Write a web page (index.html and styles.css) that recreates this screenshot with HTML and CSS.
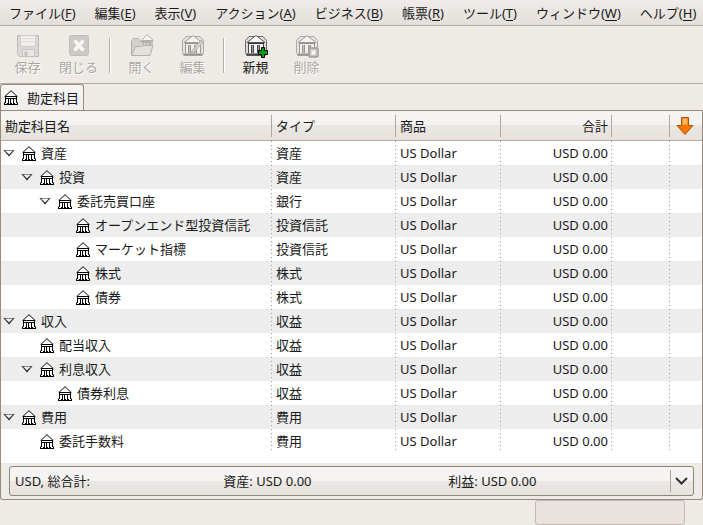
FILE: index.html
```html
<!DOCTYPE html>
<html lang="ja">
<head>
<meta charset="utf-8">
<title>勘定科目</title>
<link rel="stylesheet" href="styles.css">
</head>
<body>
<svg class="defs" aria-hidden="true">
  <symbol id="bank" viewBox="0 0 14 15">
    <path d="M7 .7 .8 6.500h12.400z" fill="#fff" stroke="#000"/>
    <path d="M1.500 7h11v6h-11z" fill="#fff"/>
    <path d="M1.500 8.500h11" stroke="#000"/>
    <path d="M1.500 7v6M4.500 8v5M6.500 8v5M9.500 8v5M12.500 7v6" fill="none" stroke="#000"/>
    <path d="M3 13.500h8" stroke="#000" stroke-dasharray="2 1"/>
    <path d="M0 14.500h14" stroke="#000"/>
    <path d="M.5 12.500v2M13.500 12.500v2" stroke="#000"/>
  </symbol>
  <symbol id="tile" viewBox="0 0 24 24">
    <path d="M5 2.500h14l3.500 4v12l-1.500 3h-18l-1.500-3v-12z" fill="#dcdcd8" stroke="#6a6a66"/>
    <path d="M2.500 20.500h19" stroke="#444" stroke-width="2"/>
    <path d="M5 10h14v9h-14z" fill="#f4f4f2"/>
    <path d="M12 1.500 3 8.500h18z" fill="#fafaf8" stroke="#555"/>
    <path d="M4 9.500h16" stroke="#333"/>
    <path d="M4.500 10v9M7.500 11v8M9.500 11v8M13.500 11v8M15.500 11v8M19.500 10v9" stroke="#444"/>
    <path d="M8.500 11v8M14.500 11v8" stroke="#999"/>
  </symbol>
</svg>

<nav class="menubar">
  <button>ファイル(<u>F</u>)</button>
  <button>編集(<u>E</u>)</button>
  <button>表示(<u>V</u>)</button>
  <button>アクション(<u>A</u>)</button>
  <button>ビジネス(<u>B</u>)</button>
  <button>帳票(<u>R</u>)</button>
  <button>ツール(<u>T</u>)</button>
  <button>ウィンドウ(<u>W</u>)</button>
  <button>ヘルプ(<u>H</u>)</button>
</nav>

<div class="toolbar" role="toolbar">
  <button class="tool" disabled>
    <svg viewBox="0 0 24 24" aria-hidden="true">
      <path d="M1.500 1.500h21v21h-19l-2-2z" fill="#c9c9c6" stroke="#8d8d88"/>
      <path d="M4.500 1.500h15v11h-15z" fill="#f4f4f2" stroke="#b0b0aa"/>
      <path d="M6 4.500h12M6 7.500h12" stroke="#d2d2ce"/>
      <path d="M6.500 15.500h12v7h-12z" fill="#e6e6e3" stroke="#9a9a95"/>
      <path d="M8.500 17.500h3v5h-3z" fill="#999994"/>
    </svg>
    保存
  </button>
  <button class="tool" disabled>
    <svg viewBox="0 0 24 24" aria-hidden="true">
      <rect x="2.500" y="1.500" width="19" height="20" rx="2" fill="#a9a9a5" stroke="#92928d"/>
      <path d="M7.500 6.500l9 10M16.500 6.500l-9 10" stroke="#fff" stroke-width="3.500"/>
    </svg>
    閉じる
  </button>
  <span class="separator"></span>
  <button class="tool" disabled>
    <svg viewBox="0 0 24 24" aria-hidden="true">
      <path d="M1.500 20.500v-14l2-2h5l2 3h10v13z" fill="#b9b9b4" stroke="#777"/>
      <path d="M17 .7 11.500 6.500h12z" fill="#fff" stroke="#777"/>
      <path d="M12 8.500h11M13.500 7v5M16.500 7v5M19.500 7v5M22 7v5" stroke="#777"/>
      <path d="M1.500 21.500l4-9h6l2-1h9.500l-3 10z" fill="#d6d6d2" stroke="#777"/>
    </svg>
    開く
  </button>
  <button class="tool" disabled>
    <svg viewBox="0 0 24 24" aria-hidden="true">
      <use href="#tile"/>
      <path d="M11 17 20 6l2 2-9 10-3 1z" fill="#bbb" stroke="#777"/>
    </svg>
    編集
  </button>
  <span class="separator"></span>
  <button class="tool">
    <svg viewBox="0 0 24 24" aria-hidden="true">
      <use href="#tile"/>
      <path d="M17.500 13.500h3v3h3v4h-3v3h-3v-3h-3v-4h3z" fill="#0a9b0a" stroke="#000"/>
    </svg>
    新規
  </button>
  <button class="tool" disabled>
    <svg viewBox="0 0 24 24" aria-hidden="true">
      <use href="#tile"/>
      <rect x="14" y="14" width="9" height="9" rx="1" fill="#999" stroke="#555" stroke-width="1.500"/>
      <path d="M16.500 16.500l4 4M20.500 16.500l-4 4" stroke="#fff" stroke-width="2"/>
    </svg>
    削除
  </button>
</div>

<div class="tabs" role="tablist">
  <button class="tab" role="tab" aria-selected="true"><svg class="bank" aria-hidden="true"><use href="#bank"/></svg>勘定科目</button>
</div>

<main class="page">
  <div class="tree">
    <table>
      <colgroup><col><col class="c-type"><col class="c-commodity"><col class="c-total"><col class="c-blank"><col class="c-menu"></colgroup>
      <thead>
        <tr>
          <th>勘定科目名</th><th>タイプ</th><th>商品</th><th class="num">合計</th><th></th>
          <th class="menu"><button aria-label="列の選択">
            <svg viewBox="0 0 18 20" aria-hidden="true">
              <path d="M5.500 1.500h7v8h4.500L9 18.500 1 9.500h4.500z" fill="#f57900" stroke="#b35000"/>
              <path d="M6.500 2.500h5v6h-5z" fill="#fcb560"/>
            </svg></button></th>
        </tr>
      </thead>
      <tbody>
        <tr><td><div class="name"><button class="toggle" aria-label="資産を折りたたむ"></button><svg class="bank" aria-hidden="true"><use href="#bank"/></svg>資産</div></td><td>資産</td><td>US Dollar</td><td class="num">USD 0.00</td><td></td><td></td></tr>
        <tr><td><div class="name level-1"><button class="toggle" aria-label="投資を折りたたむ"></button><svg class="bank" aria-hidden="true"><use href="#bank"/></svg>投資</div></td><td>資産</td><td>US Dollar</td><td class="num">USD 0.00</td><td></td><td></td></tr>
        <tr><td><div class="name level-2"><button class="toggle" aria-label="委託売買口座を折りたたむ"></button><svg class="bank" aria-hidden="true"><use href="#bank"/></svg>委託売買口座</div></td><td>銀行</td><td>US Dollar</td><td class="num">USD 0.00</td><td></td><td></td></tr>
        <tr><td><div class="name level-3 leaf"><svg class="bank" aria-hidden="true"><use href="#bank"/></svg>オープンエンド型投資信託</div></td><td>投資信託</td><td>US Dollar</td><td class="num">USD 0.00</td><td></td><td></td></tr>
        <tr><td><div class="name level-3 leaf"><svg class="bank" aria-hidden="true"><use href="#bank"/></svg>マーケット指標</div></td><td>投資信託</td><td>US Dollar</td><td class="num">USD 0.00</td><td></td><td></td></tr>
        <tr><td><div class="name level-3 leaf"><svg class="bank" aria-hidden="true"><use href="#bank"/></svg>株式</div></td><td>株式</td><td>US Dollar</td><td class="num">USD 0.00</td><td></td><td></td></tr>
        <tr><td><div class="name level-3 leaf"><svg class="bank" aria-hidden="true"><use href="#bank"/></svg>債券</div></td><td>株式</td><td>US Dollar</td><td class="num">USD 0.00</td><td></td><td></td></tr>
        <tr><td><div class="name"><button class="toggle" aria-label="収入を折りたたむ"></button><svg class="bank" aria-hidden="true"><use href="#bank"/></svg>収入</div></td><td>収益</td><td>US Dollar</td><td class="num">USD 0.00</td><td></td><td></td></tr>
        <tr><td><div class="name level-1 leaf"><svg class="bank" aria-hidden="true"><use href="#bank"/></svg>配当収入</div></td><td>収益</td><td>US Dollar</td><td class="num">USD 0.00</td><td></td><td></td></tr>
        <tr><td><div class="name level-1"><button class="toggle" aria-label="利息収入を折りたたむ"></button><svg class="bank" aria-hidden="true"><use href="#bank"/></svg>利息収入</div></td><td>収益</td><td>US Dollar</td><td class="num">USD 0.00</td><td></td><td></td></tr>
        <tr><td><div class="name level-2 leaf"><svg class="bank" aria-hidden="true"><use href="#bank"/></svg>債券利息</div></td><td>収益</td><td>US Dollar</td><td class="num">USD 0.00</td><td></td><td></td></tr>
        <tr><td><div class="name"><button class="toggle" aria-label="費用を折りたたむ"></button><svg class="bank" aria-hidden="true"><use href="#bank"/></svg>費用</div></td><td>費用</td><td>US Dollar</td><td class="num">USD 0.00</td><td></td><td></td></tr>
        <tr><td><div class="name level-1 leaf"><svg class="bank" aria-hidden="true"><use href="#bank"/></svg>委託手数料</div></td><td>費用</td><td>US Dollar</td><td class="num">USD 0.00</td><td></td><td></td></tr>
      </tbody>
    </table>
  </div>
  <div class="summary">
    <select aria-label="総合計"><option>USD, 総合計:　　　　　　　　　　&nbsp;資産: USD 0.00　　　　　　　　　　&nbsp;&nbsp;利益: USD 0.00</option></select>
    <svg class="chevron" viewBox="0 0 24 22" aria-hidden="true"><path d="M.5 0v22" stroke="#aea092"/><path d="M6 8l5.500 5.500L17 8" fill="none" stroke="#333" stroke-width="2"/></svg>
  </div>
</main>

<footer class="statusbar"><div class="progress"></div></footer>
</body>
</html>
```

FILE: styles.css
```css
* { box-sizing: border-box; }

body {
  margin: 0;
  min-height: 100vh;
  display: flex;
  flex-direction: column;
  background: #eeebe7;
  color: #1a1a1a;
  font: 13px/18px "Noto Sans", "Noto Sans CJK JP", sans-serif;
}

button, select {
  font: inherit;
  color: inherit;
  border: 0;
  background: none;
  padding: 0;
  margin: 0;
}

svg { display: block; flex: none; }
.defs { position: absolute; width: 0; height: 0; }

.menubar {
  display: flex;
  gap: 19px;
  height: 26px;
  padding: 0 9px;
  background: linear-gradient(#efece9, #e3dfda);
  border-bottom: 1px solid #b8aca2;
  white-space: nowrap;
}
.menubar u { text-underline-offset: 2px; }

.toolbar {
  display: flex;
  height: 58px;
  padding: 8px 2px 6px;
  border-bottom: 1px solid #b4aaa2;
}
.tool {
  width: 51px;
  display: flex;
  flex-direction: column;
  align-items: center;
  white-space: nowrap;
}
.tool svg { width: 24px; height: 24px; }
.tool:disabled { color: #aaa59f; text-shadow: 1px 1px #fff; }
.tool:disabled svg { opacity: .5; }
.separator {
  width: 2px;
  margin: 4px 5px;
  border-left: 1px solid #b8aca2;
  border-right: 1px solid #fff;
}

.tabs { display: flex; height: 26px; }
.tab {
  display: flex;
  align-items: center;
  gap: 9px;
  padding: 0 4px 0 3px;
  border: 1px solid #988a7c;
  border-bottom: 0;
  border-radius: 3px 3px 0 0;
  background: linear-gradient(#f6f5f3, #f0eeeb);
}
.bank { width: 14px; height: 15px; }

.page {
  display: flex;
  flex-direction: column;
  flex: 1;
  border: 1px solid #988a7c;
  border-top: 0;
  border-radius: 0 0 3px 3px;
}
.tree { flex: 1; background: #fff; }

table {
  width: 100%;
  table-layout: fixed;
  border-collapse: separate;
  border-spacing: 0;
}
.c-type { width: 124px; }
.c-commodity { width: 105px; }
.c-total { width: 111px; }
.c-blank { width: 58px; }
.c-menu { width: 33px; }

th {
  height: 31px;
  padding: 0 5px;
  text-align: left;
  font-weight: 400;
  border-top: 1px solid #988a7c;
  border-bottom: 1px solid #b8a99b;
  background: linear-gradient(#f4f3f1 0 50%, #ebe7e3 50%, #e6e1dc);
}
th:first-child { padding-left: 4px; }
th + th {
  background:
    linear-gradient(#b4a799, #b4a799) 0 50% / 1px 22px no-repeat,
    linear-gradient(#f4f3f1 0 50%, #ebe7e3 50%, #e6e1dc);
}
td { height: 24px; padding: 0 5px; white-space: nowrap; }
td + td {
  background: repeating-linear-gradient(#999 0 1px, transparent 1px 4px) 0 0 / 1px 100% no-repeat;
}
tbody tr:nth-child(even) { background: #ededed; }
th.num, td.num { text-align: right; padding-right: 3px; }
th.menu { padding: 0 7px; }
th.menu button { display: block; }
th.menu svg { width: 18px; height: 20px; }

.name { display: flex; align-items: center; gap: 5px; }
td:first-child { padding: 0 2px; }
.toggle { width: 14px; height: 12px; display: flex; align-items: center; }
.toggle::before {
  content: "";
  width: 12px;
  height: 7px;
  background: #222;
  clip-path: polygon(0 0, 100% 0, 50% 100%, 0 0, 2px 1px, 50% 5px, 10px 1px, 2px 1px);
}
.leaf::before { content: ""; width: 14px; }
.level-1 { padding-left: 18px; }
.level-2 { padding-left: 36px; }
.level-3 { padding-left: 54px; }

.summary { position: relative; padding: 3px 8px; }
.summary select {
  display: block;
  width: 100%;
  height: 30px;
  padding: 0 30px 0 5px;
  appearance: none;
  border: 1px solid #8f857b;
  border-radius: 3px;
  background: linear-gradient(#f5f4f2 0 50%, #ebe8e4 50%, #e6e1dc);
}
.chevron {
  position: absolute;
  right: 8px;
  top: 7px;
  width: 24px;
  height: 22px;
  pointer-events: none;
}

.statusbar { display: flex; justify-content: flex-end; height: 25px; padding: 0 18px 0 0; }
.progress {
  width: 150px;
  border: 1px solid #c4b8ae;
  border-radius: 3px;
  background: #e8e3df;
}
```
